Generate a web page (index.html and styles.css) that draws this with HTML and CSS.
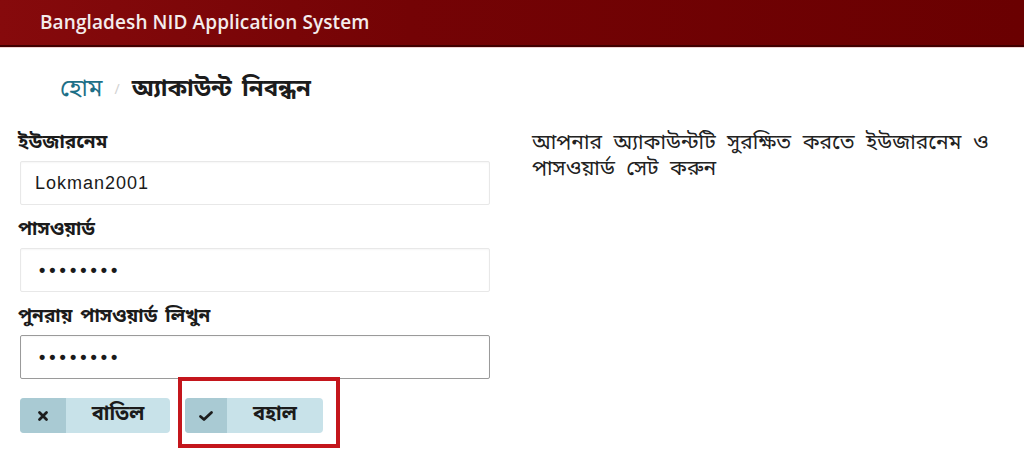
FILE: index.html
```html
<!DOCTYPE html>
<html lang="bn">
<head>
<meta charset="utf-8">
<title>Bangladesh NID Application System</title>
<link rel="stylesheet" href="styles.css">
</head>
<body>
<header class="topbar">
  <span class="brand">Bangladesh NID Application System</span>
</header>
<nav class="crumbs">
  <a class="crumb-home" href="#">হোম</a>
  <span class="crumb-sep">/</span>
  <span class="crumb-current">অ্যাকাউন্ট নিবন্ধন</span>
</nav>
<main class="content">
  <form class="form">
    <label class="label">ইউজারনেম</label>
    <div class="input">Lokman2001</div>
    <label class="label">পাসওয়ার্ড</label>
    <div class="input dots">••••••••</div>
    <label class="label">পুনরায় পাসওয়ার্ড লিখুন</label>
    <div class="input dots focused">••••••••</div>
    <div class="actions">
      <button type="button" class="btn btn-cancel">
        <span class="btn-icon">
          <svg width="12" height="12" viewBox="0 0 12 12"><path d="M2.5 2.5 L9.5 9.5 M9.5 2.5 L2.5 9.5" stroke="#1c1c1c" stroke-width="2.8" stroke-linecap="round"/></svg>
        </span>
        <span class="btn-text">বাতিল</span>
      </button>
      <div class="highlight">
        <button type="button" class="btn btn-ok">
          <span class="btn-icon">
            <svg width="16" height="12" viewBox="0 0 16 12"><path d="M2.5 6.5 L6 9.5 L13.5 2.5" fill="none" stroke="#1c1c1c" stroke-width="2.8" stroke-linecap="round" stroke-linejoin="round"/></svg>
          </span>
          <span class="btn-text">বহাল</span>
        </button>
      </div>
    </div>
  </form>
  <p class="hint">আপনার অ্যাকাউন্টটি সুরক্ষিত করতে ইউজারনেম ও<br>পাসওয়ার্ড সেট করুন</p>
</main>
</body>
</html>
```
FILE: styles.css
```css
html, body {
  margin: 0;
  padding: 0;
  background: #ffffff;
}
body {
  font-family: "Noto Sans Bengali", "Noto Sans", "Open Sans", "DejaVu Sans", sans-serif;
  color: #1b1b1b;
  width: 1024px;
  height: 465px;
  overflow: hidden;
}
.topbar {
  height: 45px;
  background: linear-gradient(90deg, #860a0c 0%, #740305 40%, #6a0001 100%);
  border-bottom: 2px solid #400000;
  box-shadow: 0 1px 0 #f1d2d2;
  display: flex;
  align-items: center;
  padding-left: 40px;
}
.brand {
  font-family: "Open Sans", "Noto Sans", sans-serif;
  font-weight: 600;
  font-size: 19px;
  color: #f4ecec;
  letter-spacing: 0.1px;
  padding-bottom: 2px;
}
.crumbs {
  display: flex;
  align-items: center;
  gap: 12px;
  padding: 25px 0 0 60px;
  height: 36px;
  font-size: 24px;
}
.crumb-home {
  color: #1d6f87;
  text-decoration: none;
}
.crumb-sep {
  color: #d2d2d2;
  font-size: 14px;
}
.crumb-current {
  font-weight: 700;
  color: #1c1c1c;
  word-spacing: 4px;
}
.content {
  display: flex;
  padding: 26px 0 0 18px;
}
.form {
  width: 472px;
  display: flex;
  flex-direction: column;
}
.label {
  font-size: 19px;
  font-weight: 700;
  color: #1b1b1b;
  line-height: 20px;
  height: 20px;
  margin-bottom: 7px;
  word-spacing: 3px;
}
.input {
  margin-left: 2px;
  height: 42px;
  border: 1px solid #e8e8e8;
  border-radius: 2px;
  display: flex;
  align-items: center;
  padding-left: 14px;
  font-family: "Liberation Sans", Arial, sans-serif;
  font-size: 18px;
  letter-spacing: 1px;
  color: #1a1a1a;
  margin-bottom: 16px;
  box-shadow: inset 0 1px 2px rgba(0,0,0,0.04);
}
.input.dots {
  padding-left: 18px;
  font-size: 18px;
  letter-spacing: 4px;
  font-weight: 700;
}
.input.focused {
  border-color: #9a9a9a;
  margin-bottom: 0;
}
.actions {
  display: flex;
  align-items: flex-start;
  margin-top: -2px;
  gap: 8px;
}
.btn {
  display: flex;
  align-items: stretch;
  padding: 0;
  border: none;
  border-radius: 4px;
  height: 35px;
  background: #c8e2e9;
  overflow: hidden;
  font-family: inherit;
  font-size: 20px;
  font-weight: 700;
  color: #1b1b1b;
}
.btn-cancel {
  margin-top: 21px;
  margin-left: 2px;
}
.btn-icon {
  width: 46px;
  background: #a9cad3;
  display: flex;
  align-items: center;
  justify-content: center;
}
.btn-text {
  width: 104px;
  display: flex;
  align-items: center;
  justify-content: center;
  padding-bottom: 2px;
}
.btn-ok .btn-icon { width: 42px; }
.btn-ok .btn-text { width: 96px; }
.highlight {
  border: 4px solid #c4161c;
  width: 151px;
  height: 46px;
  padding: 17px 0 0 3px;
  box-sizing: content-box;
}
.hint {
  margin: -3px 0 0 42px;
  width: 480px;
  white-space: nowrap;
  font-size: 21px;
  word-spacing: 6px;
  line-height: 26px;
  color: #222;
}
```
